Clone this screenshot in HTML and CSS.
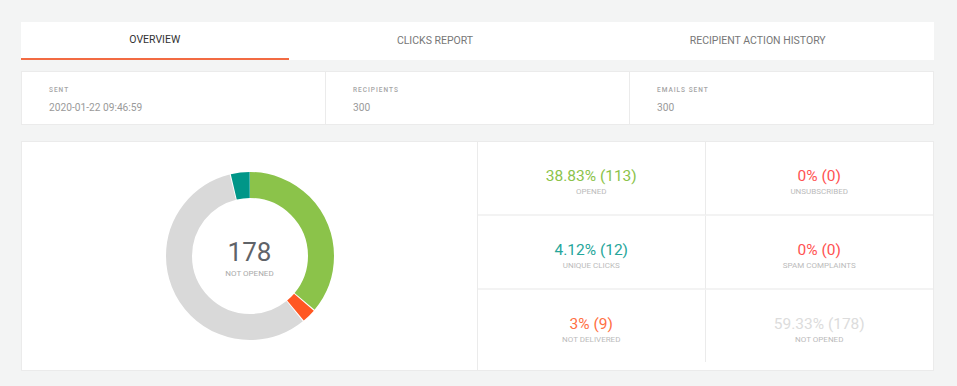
FILE: index.html
```html
<!DOCTYPE html>
<html lang="en-US">
<head>
	<title>Campaign Report</title>
	<meta charset="UTF-8">
	<meta name="viewport" content="width=device-width, initial-scale=1">
	<link rel="stylesheet" href="styles.css">
</head>
<body>
	<div id="report">
		<div class="tabs">
			<div class="tab active">OVERVIEW</div>
			<div class="tab">CLICKS REPORT</div>
			<div class="tab">RECIPIENT ACTION HISTORY</div>
		</div>
		<div class="info">
			<div class="info-item">
				<div class="info-label">SENT</div>
				<div class="info-value">2020-01-22 09:46:59</div>
			</div>
			<div class="info-item">
				<div class="info-label">RECIPIENTS</div>
				<div class="info-value">300</div>
			</div>
			<div class="info-item">
				<div class="info-label">EMAILS SENT</div>
				<div class="info-value">300</div>
			</div>
		</div>
		<div class="overview">
			<div class="chart">
				<div class="donut">
					<svg width="168" height="168" viewBox="0 0 168 168">
						<g transform="rotate(-90 84 84)" fill="none" stroke-width="26">
							<circle cx="84" cy="84" r="71" stroke="#8bc34a" stroke-dasharray="160.57 446.11" stroke-dashoffset="0"/>
							<circle cx="84" cy="84" r="71" stroke="#ff5722" stroke-dasharray="11.87 446.11" stroke-dashoffset="-161.57"/>
							<circle cx="84" cy="84" r="71" stroke="#d9d9d9" stroke-dasharray="253.51 446.11" stroke-dashoffset="-174.44"/>
							<circle cx="84" cy="84" r="71" stroke="#009688" stroke-dasharray="16.16 446.11" stroke-dashoffset="-428.95"/>
						</g>
					</svg>
					<div class="donut-center">
						<div class="donut-number">178</div>
						<div class="donut-label">NOT OPENED</div>
					</div>
				</div>
			</div>
			<div class="stats">
				<div class="stat">
					<div class="stat-value green">38.83% (113)</div>
					<div class="stat-label">OPENED</div>
				</div>
				<div class="stat">
					<div class="stat-value red">0% (0)</div>
					<div class="stat-label">UNSUBSCRIBED</div>
				</div>
				<div class="stat">
					<div class="stat-value teal">4.12% (12)</div>
					<div class="stat-label">UNIQUE CLICKS</div>
				</div>
				<div class="stat">
					<div class="stat-value red">0% (0)</div>
					<div class="stat-label">SPAM COMPLAINTS</div>
				</div>
				<div class="stat">
					<div class="stat-value orange">3% (9)</div>
					<div class="stat-label">NOT DELIVERED</div>
				</div>
				<div class="stat">
					<div class="stat-value grey">59.33% (178)</div>
					<div class="stat-label">NOT OPENED</div>
				</div>
			</div>
		</div>
	</div>
</body>
</html>
```

FILE: styles.css
```css
html, body {
	margin: 0;
	background: #f3f4f4;
}
body {
	font-family: "Roboto", "Liberation Sans", sans-serif;
	padding: 22px 23px 0 21px;
}
#report {
	width: 913px;
}
.tabs {
	display: flex;
	background: #fff;
	height: 38px;
}
.tab {
	flex: 1 1 auto;
	text-align: center;
	font-size: 10.5px;
	color: #777;
	line-height: 38px;
	box-sizing: border-box;
}
.tab.active {
	color: #333;
	border-bottom: 2px solid #f26b43;
	line-height: 36px;
}
.info {
	display: flex;
	margin-top: 11px;
	background: #fff;
	border: 1px solid #ebebeb;
}
.info-item {
	flex: 1;
	padding: 13px 27px 9px;
	border-left: 1px solid #ebebeb;
}
.info-item:first-child {
	border-left: none;
}
.info-label {
	font-size: 6.5px;
	font-weight: 500;
	letter-spacing: 1px;
	color: #a5a5a5;
	line-height: 10px;
}
.info-value {
	margin-top: 6px;
	font-size: 10.2px;
	color: #9a9a9a;
	line-height: 14px;
}
.overview {
	display: flex;
	margin-top: 16px;
	background: #fff;
	border: 1px solid #ebebeb;
	height: 228px;
}
.chart {
	flex: 1;
	display: flex;
	align-items: center;
	justify-content: center;
	border-right: 1px solid #ebebeb;
}
.donut {
	position: relative;
	width: 168px;
	height: 168px;
}
.donut svg {
	display: block;
}
.donut-center {
	position: absolute;
	top: 0;
	left: 0;
	right: 0;
	bottom: 0;
	display: flex;
	flex-direction: column;
	align-items: center;
	justify-content: center;
	padding-top: 2px;
}
.donut-number {
	font-size: 26px;
	color: #5f6368;
	line-height: 30px;
}
.donut-label {
	font-size: 8px;
	color: #aaa;
	margin-top: 2px;
}
.stats {
	flex: 1;
	display: grid;
	grid-template-columns: 1fr 1fr;
	grid-template-rows: 74px 74px 72px;
	align-self: flex-start;
}
.stat {
	display: flex;
	flex-direction: column;
	align-items: center;
	justify-content: center;
	padding-top: 7px;
	box-sizing: border-box;
	border-bottom: 2px solid #f3f3f3;
}
.stat:nth-child(odd) {
	border-right: 1px solid #ebebeb;
}
.stat:nth-child(n+5) {
	border-bottom: none;
}
.stat-value {
	font-size: 15.5px;
	line-height: 18px;
}
.stat-label {
	font-size: 8px;
	color: #bbb;
	margin-top: 2px;
	line-height: 10px;
}
.green {
	color: #8bc34a;
}
.red {
	color: #ff5252;
}
.teal {
	color: #26a69a;
}
.orange {
	color: #ff7043;
}
.grey {
	color: #dcdcdc;
}
```
